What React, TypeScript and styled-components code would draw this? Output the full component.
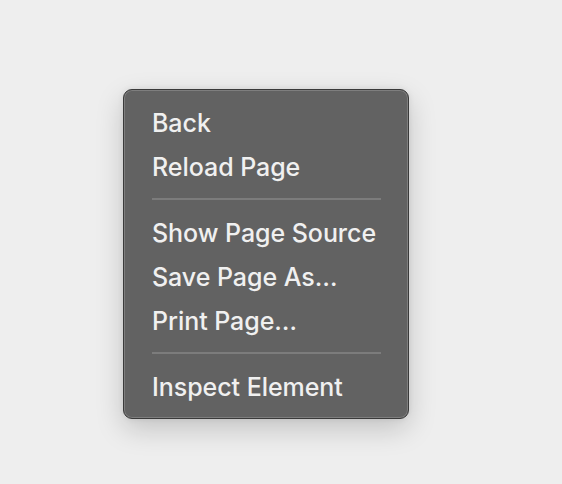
import React from "react";
import styled, { createGlobalStyle } from "styled-components";

const GlobalStyle = createGlobalStyle`
  html, body {
    margin: 0;
    padding: 0;
    background: #eeeeee;
  }
  body {
    font-family: Inter, "Noto Sans", sans-serif;
  }
`;

const Page = styled.div`
  width: 562px;
  height: 484px;
  box-sizing: border-box;
  padding: 89px 0 0 123px;
`;

const Menu = styled.ul`
  list-style: none;
  margin: 0;
  width: 286px;
  box-sizing: border-box;
  padding: 10px 0 10px;
  background: #626262;
  border: 1px solid #3a3a3a;
  border-radius: 9px;
  box-shadow: inset 0 0 0 1px rgba(255, 255, 255, 0.18), 0 10px 28px rgba(0, 0, 0, 0.18),
    0 0 6px rgba(0, 0, 0, 0.08);
`;

const Item = styled.li`
  height: 44px;
  box-sizing: border-box;
  display: flex;
  align-items: center;
  padding: 2px 28px 0;
  font-size: 25px;
  font-weight: 500;
  color: #f0f0f0;
  letter-spacing: -0.05px;
`;

const Separator = styled.li`
  height: 22px;
  display: flex;
  align-items: center;
  padding: 0 27px 0 28px;

  &::after {
    content: "";
    flex: 1;
    height: 2px;
    background: #7c7c7c;
  }
`;

type Entry = string | null;

const entries: Entry[] = [
  "Back",
  "Reload Page",
  null,
  "Show Page Source",
  "Save Page As…",
  "Print Page…",
  null,
  "Inspect Element",
];

export default function App() {
  return (
    <>
      <GlobalStyle />
      <Page>
        <Menu>
          {entries.map((e, i) => (e === null ? <Separator key={i} /> : <Item key={i}>{e}</Item>))}
        </Menu>
      </Page>
    </>
  );
}
